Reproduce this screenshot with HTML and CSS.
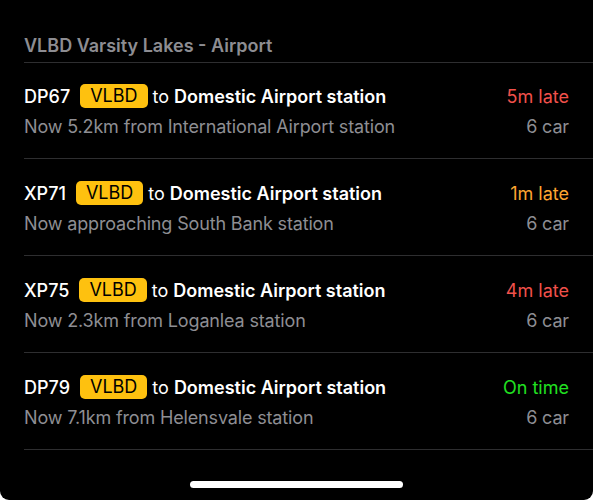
FILE: index.html
```html
<!DOCTYPE html>
<html lang="en">
<head>
    <meta charset="UTF-8">
    <meta name="viewport" content="width=device-width, initial-scale=1.0">
    <title>VLBD Varsity Lakes - Airport</title>
    <link rel="stylesheet" href="styles.css">
</head>
<body>
    <div id="screen">
        <div class="section-header">VLBD Varsity Lakes - Airport</div>
        <div class="service-list">
            <div class="service">
                <div class="line">
                    <div class="title">
                        <span class="run">DP67</span>
                        <span class="badge">VLBD</span>
                        <span class="to">to</span>
                        <span class="dest">Domestic Airport station</span>
                    </div>
                    <div class="status late">5m late</div>
                </div>
                <div class="line sub">
                    <div>Now 5.2km from International Airport station</div>
                    <div>6 car</div>
                </div>
            </div>
            <div class="service">
                <div class="line">
                    <div class="title">
                        <span class="run">XP71</span>
                        <span class="badge">VLBD</span>
                        <span class="to">to</span>
                        <span class="dest">Domestic Airport station</span>
                    </div>
                    <div class="status slight">1m late</div>
                </div>
                <div class="line sub">
                    <div>Now approaching South Bank station</div>
                    <div>6 car</div>
                </div>
            </div>
            <div class="service">
                <div class="line">
                    <div class="title">
                        <span class="run">XP75</span>
                        <span class="badge">VLBD</span>
                        <span class="to">to</span>
                        <span class="dest">Domestic Airport station</span>
                    </div>
                    <div class="status late">4m late</div>
                </div>
                <div class="line sub">
                    <div>Now 2.3km from Loganlea station</div>
                    <div>6 car</div>
                </div>
            </div>
            <div class="service">
                <div class="line">
                    <div class="title">
                        <span class="run">DP79</span>
                        <span class="badge">VLBD</span>
                        <span class="to">to</span>
                        <span class="dest">Domestic Airport station</span>
                    </div>
                    <div class="status ontime">On time</div>
                </div>
                <div class="line sub">
                    <div>Now 7.1km from Helensvale station</div>
                    <div>6 car</div>
                </div>
            </div>
        </div>
        <div class="home-bar"></div>
    </div>
</body>
</html>
```

FILE: styles.css
```css
html, body {
    margin: 0;
    background-color: #fff;
}
body {
    font-family: Inter, "Liberation Sans", sans-serif;
    font-size: 18px;
    color: #fff;
    -webkit-font-smoothing: antialiased;
}
#screen {
    width: 593px;
    height: 500px;
    background-color: #000;
    border-radius: 0 0 9px 9px;
    overflow: hidden;
    display: flex;
    flex-direction: column;
}
.section-header {
    padding: 35px 24px 0 24px;
    height: 27px;
    line-height: 22px;
    color: #8d8d92;
    font-weight: 600;
}
.service-list {
    margin-left: 24px;
    border-top: 1px solid #2e2e30;
}
.service {
    height: 97px;
    box-sizing: border-box;
    padding: 20px 24px 0 0;
    border-bottom: 1px solid #2e2e30;
}
.service:first-child {
    height: 96px;
    padding-top: 19px;
}
.line {
    display: flex;
    justify-content: space-between;
    align-items: center;
    height: 28px;
}
.line.sub {
    color: #8e8e93;
    height: 32px;
    letter-spacing: -0.15px;
}
.title {
    display: flex;
    align-items: center;
}
.run {
    font-weight: 500;
    margin-right: 10px;
}
.badge {
    background-color: #fec10f;
    color: #000;
    border-radius: 5px;
    padding: 1px 10px;
    height: 22px;
    line-height: 22px;
    margin-right: 5px;
}
.to {
    margin-right: 5px;
}
.dest {
    font-weight: 600;
}
.status.late {
    color: #f1514b;
}
.status.slight {
    color: #fea531;
}
.status.ontime {
    color: #21e021;
}
.home-bar {
    width: 213px;
    height: 7px;
    border-radius: 4px;
    background-color: #fff;
    margin: auto auto 12px auto;
}
```
